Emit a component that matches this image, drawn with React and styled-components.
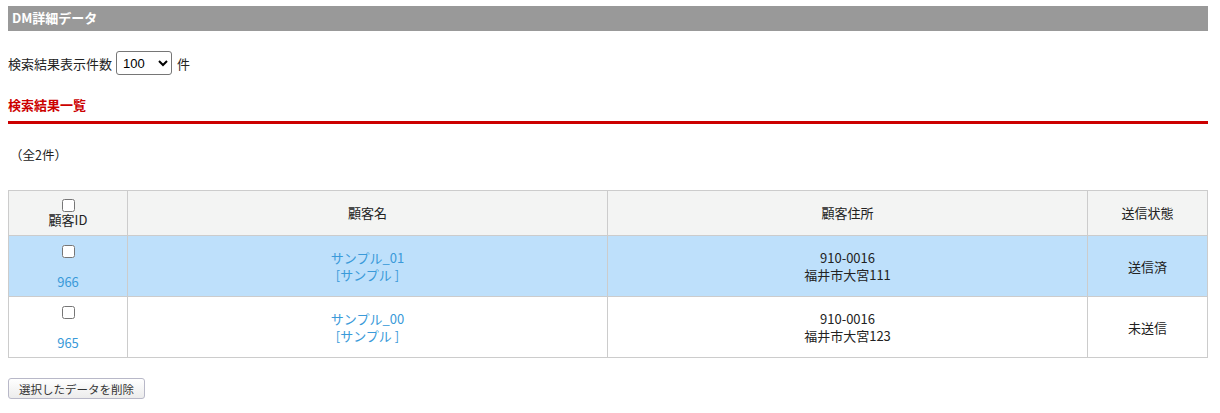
import React, { useState } from 'react'
import styled, { createGlobalStyle } from 'styled-components'

const GlobalStyle = createGlobalStyle`
  body{
    margin: 0;
    background: #fff;
    color: #222;
    font-family: "Noto Sans CJK JP", "Noto Sans", sans-serif;
    font-size: 13px;
  }
`

const rows = [
  { id: 966, name: 'サンプル_01', kana: 'サンプル', zip: '910-0016', addr: '福井市大宮111', status: '送信済', selected: true },
  { id: 965, name: 'サンプル_00', kana: 'サンプル', zip: '910-0016', addr: '福井市大宮123', status: '未送信', selected: false },
]

const App = () => {
  const [limit, setLimit] = useState('100')

  return (
    <>
      <GlobalStyle />
      <Page>
        <TitleBar>DM詳細データ</TitleBar>

        <LimitRow>
          検索結果表示件数
          <Select value={limit} onChange={(e) => setLimit(e.target.value)}>
            <option value="10">10</option>
            <option value="50">50</option>
            <option value="100">100</option>
          </Select>
          件
        </LimitRow>

        <SectionTitle>検索結果一覧</SectionTitle>

        <Count>（全2件）</Count>

        <Table>
          <thead>
            <tr>
              <Th $w="118px">
                <IdBox>
                  <Check type="checkbox" />
                  <span>顧客ID</span>
                </IdBox>
              </Th>
              <Th $w="479px">顧客名</Th>
              <Th $w="479px">顧客住所</Th>
              <Th>送信状態</Th>
            </tr>
          </thead>
          <tbody>
            {rows.map((r) => (
              <Row key={r.id} $selected={r.selected}>
                <IdCell>
                  <IdBox>
                    <Check type="checkbox" />
                    <IdLink>{r.id}</IdLink>
                  </IdBox>
                </IdCell>
                <Td>
                  <NameLink>
                    {r.name}
                    <br />[{r.kana} ]
                  </NameLink>
                </Td>
                <Td>
                  {r.zip}
                  <br />
                  {r.addr}
                </Td>
                <Td>{r.status}</Td>
              </Row>
            ))}
          </tbody>
        </Table>

        <DeleteButton type="button">選択したデータを削除</DeleteButton>
      </Page>
    </>
  )
}

export default App

const Page = styled.div`
  width: 1200px;
  padding: 6px 8px 14px;
`

const TitleBar = styled.div`
  height: 25px;
  line-height: 23px;
  padding-left: 4px;
  background-color: #999;
  color: #fff;
  font-weight: bold;
  font-size: 13px;
`

const LimitRow = styled.div`
  display: flex;
  align-items: center;
  gap: 4px;
  margin-top: 20px;
  height: 24px;
`

const Select = styled.select`
  width: 56px;
  height: 24px;
  margin: 0 1px 0 0;
  padding: 0 2px;
  border: 1px solid #767676;
  border-radius: 3px;
  background: #fff;
  color: #000;
  font-family: "Liberation Sans", Arial, sans-serif;
  font-size: 13px;
`

const SectionTitle = styled.div`
  margin-top: 22px;
  padding-bottom: 8px;
  line-height: 16px;
  border-bottom: 3px solid #cc0000;
  color: #cc0000;
  font-weight: bold;
`

const Count = styled.div`
  margin-top: 23px;
  padding-left: 2px;
  line-height: 16px;
  font-size: 12.5px;
`

const Table = styled.table`
  width: 1200px;
  margin-top: 27px;
  border-collapse: collapse;
  table-layout: fixed;
  border: 1px solid #cccccc;
  font-size: 13px;
`

const Th = styled.th`
  width: ${(p) => p.$w || 'auto'};
  height: 44px;
  padding: 0;
  background-color: #f3f4f3;
  border: 1px solid #cccccc;
  font-weight: normal;
  line-height: 16px;
  text-align: center;
  vertical-align: middle;
`

const Row = styled.tr`
  background-color: ${(p) => (p.$selected ? '#bee0fb' : '#fff')};
`

const Td = styled.td`
  padding: 0 6px;
  border: 1px solid #cccccc;
  line-height: 17px;
  text-align: center;
  vertical-align: middle;
`

const IdCell = styled(Td)`
  vertical-align: top;
  padding: 9px 6px 6px;
`

const IdBox = styled.div`
  display: flex;
  flex-direction: column;
  align-items: center;
`

const Check = styled.input`
  width: 13px;
  height: 13px;
  margin: 0;
`

const IdLink = styled.a`
  margin-top: 15px;
  line-height: 17px;
  color: #3a9ad9;
  text-decoration: none;
`

const NameLink = styled.a`
  color: #3a9ad9;
  text-decoration: none;
`

const DeleteButton = styled.button`
  display: block;
  margin-top: 20px;
  width: 137px;
  height: 21px;
  padding: 0;
  border: 1px solid #b8b8c8;
  border-radius: 3px;
  background: linear-gradient(#ffffff, #ececec);
  color: #333;
  font-family: "Noto Sans CJK JP", sans-serif;
  font-size: 11.5px;
`
